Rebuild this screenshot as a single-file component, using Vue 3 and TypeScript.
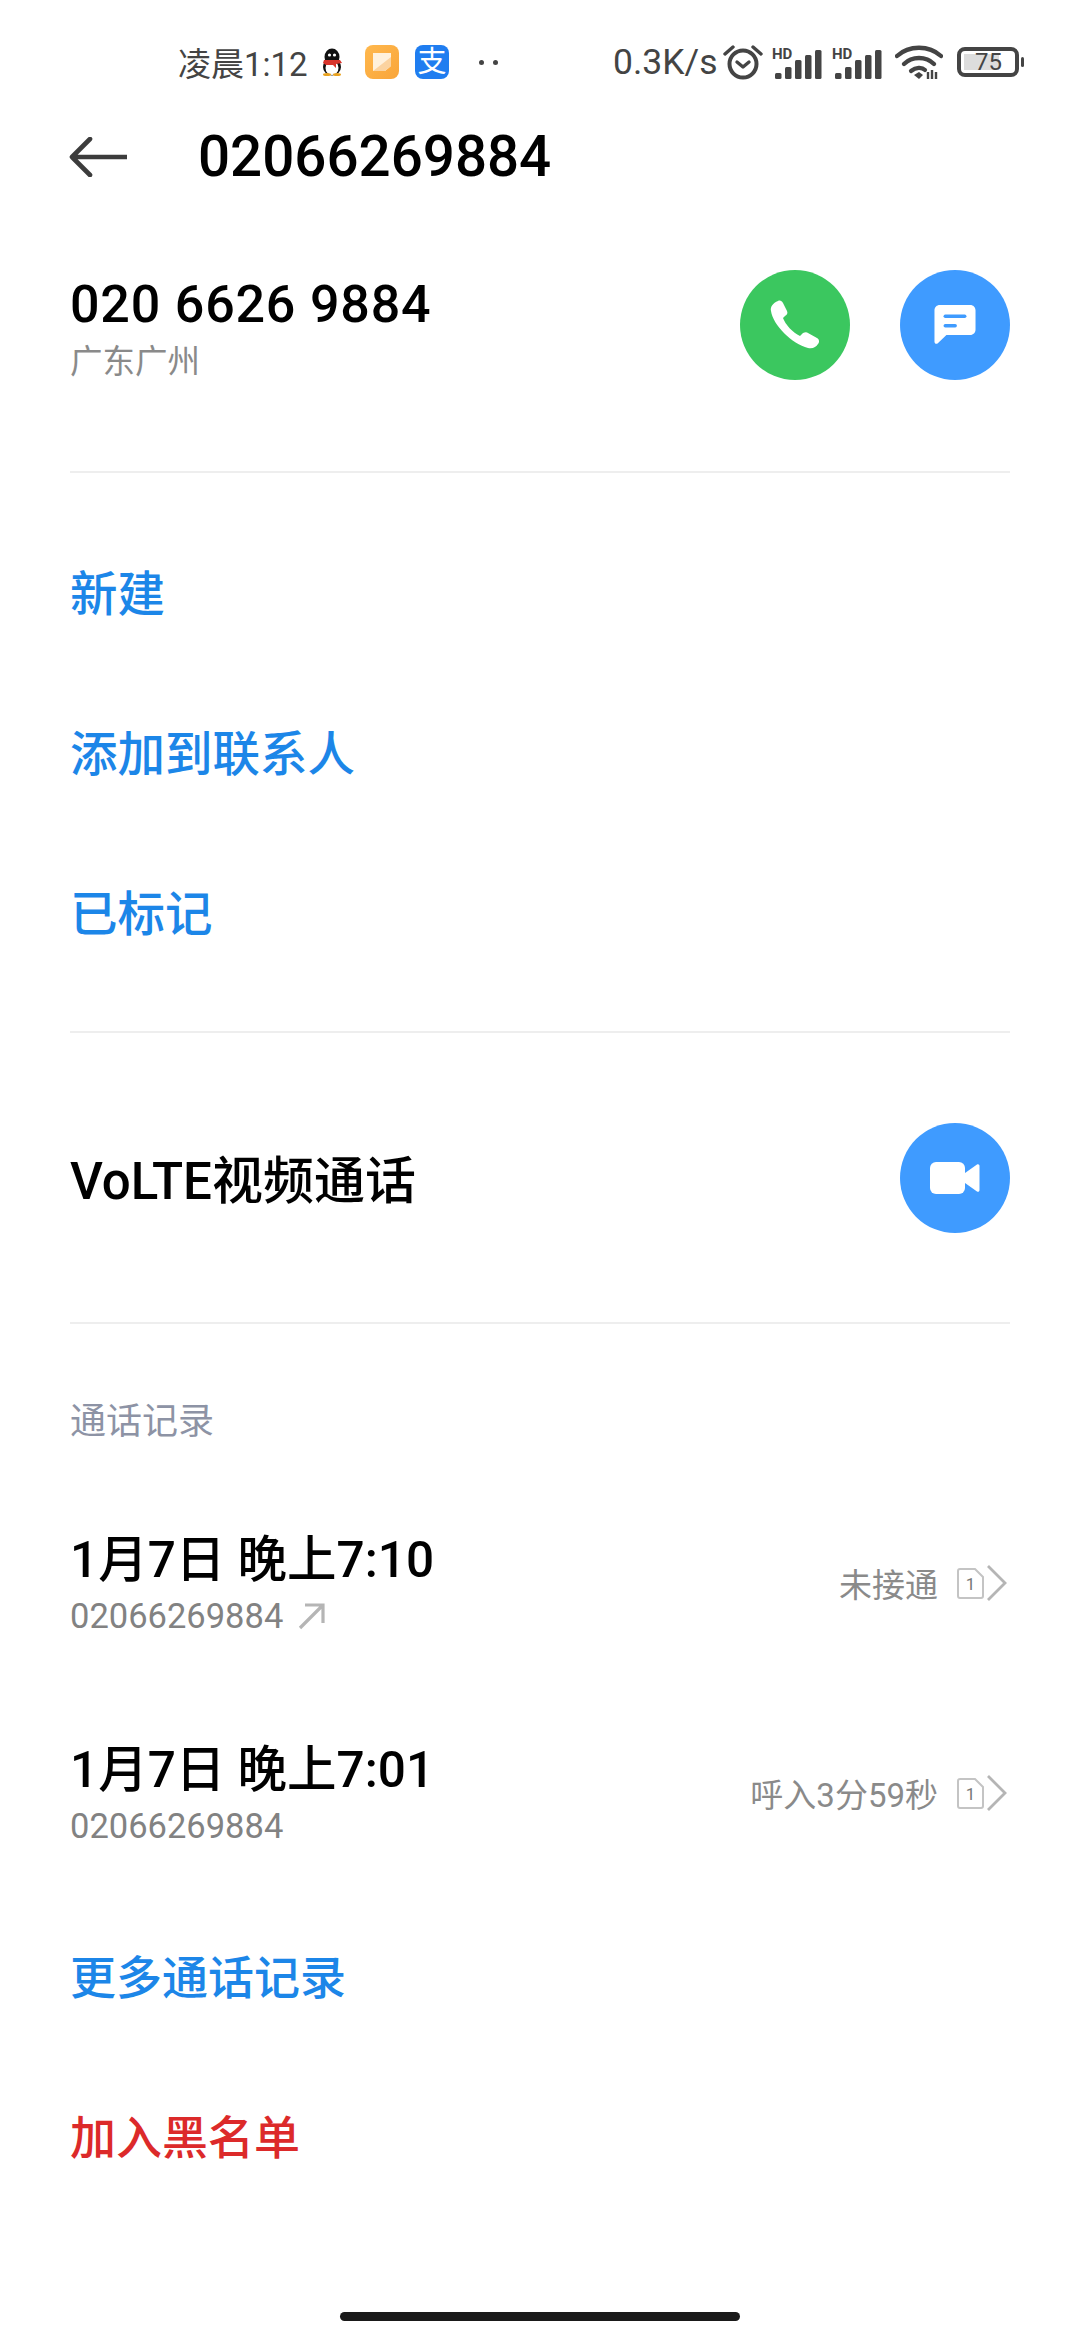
<script setup lang="ts">
interface CallRecord {
  time: string
  number: string
  status: string
  outgoing: boolean
}

const records: CallRecord[] = [
  { time: '1月7日 晚上7:10', number: '02066269884', status: '未接通', outgoing: true },
  { time: '1月7日 晚上7:01', number: '02066269884', status: '呼入3分59秒', outgoing: false },
]

const signalBars = [0, 1]
</script>

<template>
  <div class="page">
    <div class="status-bar">
      <span class="clock">凌晨1:12</span>
      <svg class="qq" viewBox="0 0 24 28" width="24" height="28">
        <ellipse cx="12" cy="9" rx="7.5" ry="8.5" fill="#111" />
        <ellipse cx="12" cy="19" rx="9" ry="8.5" fill="#111" />
        <ellipse cx="12" cy="20" rx="6.5" ry="7" fill="#fff" />
        <circle cx="9.5" cy="7" r="1.6" fill="#fff" />
        <circle cx="14.5" cy="7" r="1.6" fill="#fff" />
        <path d="M4 12h16l2 3-6 1v4l-3-3H6l-3-2z" fill="#d8352c" />
        <ellipse cx="7" cy="26.5" rx="4" ry="1.5" fill="#e9a21f" />
        <ellipse cx="17" cy="26.5" rx="4" ry="1.5" fill="#e9a21f" />
      </svg>
      <svg class="note" viewBox="0 0 34 34" width="34" height="34">
        <defs>
          <linearGradient id="noteBg" x1="0" y1="0" x2="1" y2="1">
            <stop offset="0" stop-color="#ffb84d" />
            <stop offset="1" stop-color="#f9a53a" />
          </linearGradient>
        </defs>
        <rect width="34" height="34" rx="8" fill="url(#noteBg)" />
        <path d="M8 8h18v13l-6 5H8z" fill="#fff1dc" />
        <path d="M26 12v9l-6 5H8z" fill="#fbd3a0" />
      </svg>
      <span class="alipay">支</span>
      <span class="dots"><i></i><i></i></span>
      <span class="net">0.3K/s</span>
      <svg class="alarm" viewBox="0 0 40 36" width="40" height="36">
        <circle cx="20" cy="20" r="13.5" fill="none" stroke="#444" stroke-width="4" />
        <path d="M14 18l6 5 6-5" fill="none" stroke="#444" stroke-width="3.4" stroke-linecap="round" stroke-linejoin="round" />
        <path d="M2 10L10 3M38 10L30 3" stroke="#444" stroke-width="3.4" stroke-linecap="round" />
      </svg>
      <svg v-for="s in signalBars" :key="s" class="signal" viewBox="0 -3 51 35" width="51" height="35">
        <text x="0" y="11" font-size="15" font-weight="700" fill="#444" font-family="Roboto, sans-serif">HD</text>
        <rect x="3" y="25" width="6.5" height="6" rx="1.5" fill="#444" />
        <rect x="13" y="19" width="6.5" height="12" rx="1.5" fill="#444" />
        <rect x="23" y="12" width="6.5" height="19" rx="1.5" fill="#444" />
        <rect x="33" y="7" width="6.5" height="24" rx="1.5" fill="#444" />
        <rect x="43" y="2" width="6.5" height="29" rx="1.5" fill="#444" />
      </svg>
      <svg class="wifi" viewBox="0 0 48 36" width="48" height="36">
        <path d="M2 12C14 1 34 1 46 12" fill="none" stroke="#444" stroke-width="4.4" stroke-linecap="round" />
        <path d="M9 20C17 12 31 12 39 20" fill="none" stroke="#444" stroke-width="4.4" stroke-linecap="round" />
        <path d="M16 27c5-4 11-4 14-1" fill="none" stroke="#444" stroke-width="4.2" stroke-linecap="round" />
        <path d="M19 31l5-3 4 3-4 4z" fill="#444" />
        <path d="M33 28v7M37 26v9M41 28v7" stroke="#444" stroke-width="2.4" />
      </svg>
      <span class="battery">
        <span class="battery-body"><span class="battery-fill"></span><span class="battery-num">75</span></span>
        <span class="battery-nub"></span>
      </span>
    </div>

    <header class="top-bar">
      <svg class="back" viewBox="0 0 58 40" width="58" height="40">
        <path d="M21 2L3 20l18 18M3 20h54" fill="none" stroke="#3c3c3c" stroke-width="4.6" stroke-linecap="round" stroke-linejoin="round" />
      </svg>
      <h1 class="title">02066269884</h1>
    </header>

    <section class="contact">
      <div class="contact-text">
        <div class="phone">020 6626 9884</div>
        <div class="region">广东广州</div>
      </div>
      <div class="actions">
        <span class="round green">
          <svg viewBox="0 0 50 50" width="50" height="50">
            <path d="M8 1c2-1 4 0 5 2l4 8c1 2 0 4-2 5l-2 2c2 6 10 15 17 18l3-3c2-1 4-1 5 0l9 5c2 1 3 4 1 6-2 3-5 5-10 4C22 44 3 25 1 11 0 7 3 3 8 1z" fill="#fff" />
          </svg>
        </span>
        <span class="round blue">
          <svg viewBox="0 0 46 44" width="44" height="42">
            <path d="M7 1h32c3 0 5.5 2.3 5.5 5.5V27c0 3-2.5 5.5-5.5 5.5H14L5 41c-1.5 1.3-3.5.5-3.5-1.5V6.5C1.5 3.3 4 1 7 1z" fill="#fff" />
            <rect x="11" y="11" width="24" height="3.6" rx="1.8" fill="#3f9bff" />
            <rect x="11" y="21" width="14" height="3.6" rx="1.8" fill="#3f9bff" />
          </svg>
        </span>
      </div>
    </section>

    <section class="links first-links">
      <div class="link">新建</div>
      <div class="link">添加到联系人</div>
      <div class="link">已标记</div>
    </section>

    <section class="video-row">
      <span class="video-label">VoLTE视频通话</span>
      <span class="round blue">
        <svg viewBox="0 0 50 32" width="50" height="32">
          <rect x="0" y="0" width="35" height="32" rx="6" fill="#fff" />
          <path d="M35 11L47 2.5c1.3-.8 2.5 0 2.5 1.5v24c0 1.5-1.2 2.3-2.5 1.5L35 21z" fill="#fff" />
        </svg>
      </span>
    </section>

    <section class="history">
      <div class="history-label">通话记录</div>
      <div v-for="r in records" :key="r.time" class="record">
        <div>
          <div class="record-time">{{ r.time }}</div>
          <div class="record-number">
            {{ r.number }}
            <svg v-if="r.outgoing" viewBox="0 0 28 28" width="28" height="28">
              <path d="M3 26L25 4M8 3h18v18" fill="none" stroke="#b5b5b5" stroke-width="3.2" />
            </svg>
          </div>
        </div>
        <div class="record-right">
          <span class="record-status">{{ r.status }}</span>
          <svg class="sim" viewBox="0 0 27 31" width="27" height="31">
            <path d="M3 1h15l8 8v19a2 2 0 0 1-2 2H3a2 2 0 0 1-2-2V3a2 2 0 0 1 2-2z" fill="none" stroke="#c4c4c4" stroke-width="2" />
            <text x="13.5" y="22" text-anchor="middle" font-size="17" fill="#777" font-family="Roboto, sans-serif">1</text>
          </svg>
          <svg viewBox="0 0 20 36" width="20" height="36">
            <path d="M1 1l17 17L1 35" fill="none" stroke="#b5b5b5" stroke-width="2.8" />
          </svg>
        </div>
      </div>
    </section>

    <section class="links last-links">
      <div class="link">更多通话记录</div>
      <div class="link danger">加入黑名单</div>
    </section>

    <div class="home-bar"></div>
  </div>
</template>

<style>
html,
body {
  margin: 0;
  background: #fff;
}
</style>

<style scoped>
.page {
  width: 1080px;
  height: 2340px;
  position: relative;
  overflow: hidden;
  background: #fff;
  font-family: Roboto, "Noto Sans CJK SC", sans-serif;
}

.status-bar {
  height: 124px;
  box-sizing: border-box;
  padding-left: 178px;
  display: flex;
  align-items: center;
  color: #444;
}

.clock {
  font-size: 33px;
  width: 142px;
}

.note {
  margin-left: 21px;
}

.alipay {
  width: 34px;
  height: 34px;
  margin-left: 16px;
  border-radius: 8px;
  background: #1f7df0;
  color: #fff;
  font-size: 29px;
  line-height: 34px;
  text-align: center;
}

.dots {
  display: flex;
  gap: 9px;
  margin-left: 30px;
}

.dots i {
  width: 5px;
  height: 5px;
  border-radius: 50%;
  background: #444;
}

.net {
  font-size: 35.5px;
  margin-left: 115px;
  width: 106px;
}

.alarm {
  margin-left: 4px;
}

.signal {
  margin-left: 9px;
}

.wifi {
  margin-left: 12px;
}

.battery {
  display: flex;
  align-items: center;
  margin-left: 14px;
}

.battery-body {
  width: 54px;
  height: 22px;
  border: 4px solid #444;
  border-radius: 8px;
  position: relative;
  display: block;
}

.battery-fill {
  position: absolute;
  left: 3px;
  top: 3px;
  bottom: 3px;
  width: 35px;
  background: #ddd;
}

.battery-num {
  position: absolute;
  left: 14px;
  top: -4px;
  font-size: 24px;
  line-height: 30px;
  color: #444;
}

.battery-nub {
  width: 3px;
  height: 10px;
  margin-left: 2px;
  border-radius: 2px;
  background: #444;
}

.top-bar {
  height: 66px;
  padding-left: 69px;
  display: flex;
  align-items: center;
}

.title {
  margin: 0 0 0 71px;
  font-size: 56.5px;
  font-weight: 500;
  color: #000;
  line-height: 66px;
}

.contact {
  height: 283px;
  box-sizing: border-box;
  margin: 0 70px;
  padding-top: 80px;
  border-bottom: 2px solid #eee;
  display: flex;
  justify-content: space-between;
  align-items: flex-start;
}

.contact-text {
  padding-top: 2px;
}

.phone {
  font-size: 52px;
  font-weight: 500;
  line-height: 66px;
  letter-spacing: 0.8px;
  color: #000;
}

.region {
  font-size: 32.5px;
  line-height: 44px;
  margin-top: 2px;
  color: #8a8a8a;
}

.actions {
  display: flex;
  gap: 50px;
}

.round {
  width: 110px;
  height: 110px;
  border-radius: 50%;
  display: flex;
  align-items: center;
  justify-content: center;
}

.green {
  background: #3bc75f;
}

.blue {
  background: #3f9bff;
}

.links {
  margin: 0 70px;
  display: flex;
  flex-direction: column;
}

.first-links {
  height: 560px;
  box-sizing: border-box;
  padding-top: 42px;
  border-bottom: 2px solid #eee;
}

.link {
  height: 160px;
  line-height: 160px;
  font-size: 47.5px;
  font-weight: 500;
  color: #1c86e8;
}

.last-links .link {
  font-size: 46px;
}

.danger {
  color: #dc2a2a;
}

.video-row {
  height: 291px;
  box-sizing: border-box;
  margin: 0 70px;
  border-bottom: 2px solid #eee;
  display: flex;
  align-items: center;
  justify-content: space-between;
}

.video-label {
  font-size: 51px;
  font-weight: 500;
  color: #000;
  padding-bottom: 2px;
}

.history {
  margin: 0 70px;
}

.history-label {
  font-size: 36px;
  line-height: 50px;
  margin-top: 73px;
  margin-bottom: 31px;
  color: #8d93a5;
}

.record {
  height: 210px;
  display: flex;
  align-items: center;
  justify-content: space-between;
}

.record-time {
  font-size: 49.5px;
  font-weight: 500;
  line-height: 66px;
  color: #000;
}

.record-number {
  font-size: 34.5px;
  line-height: 46px;
  color: #828282;
  display: flex;
  align-items: center;
  gap: 14px;
}

.record-right {
  display: flex;
  align-items: center;
  color: #8a8a8a;
  margin-right: 3px;
}

.record-status {
  font-size: 33px;
  margin-right: 19px;
}

.sim {
  margin-right: 3px;
}

.home-bar {
  position: absolute;
  left: 340px;
  top: 2312px;
  width: 400px;
  height: 9px;
  border-radius: 5px;
  background: #1a1a1a;
}
</style>
